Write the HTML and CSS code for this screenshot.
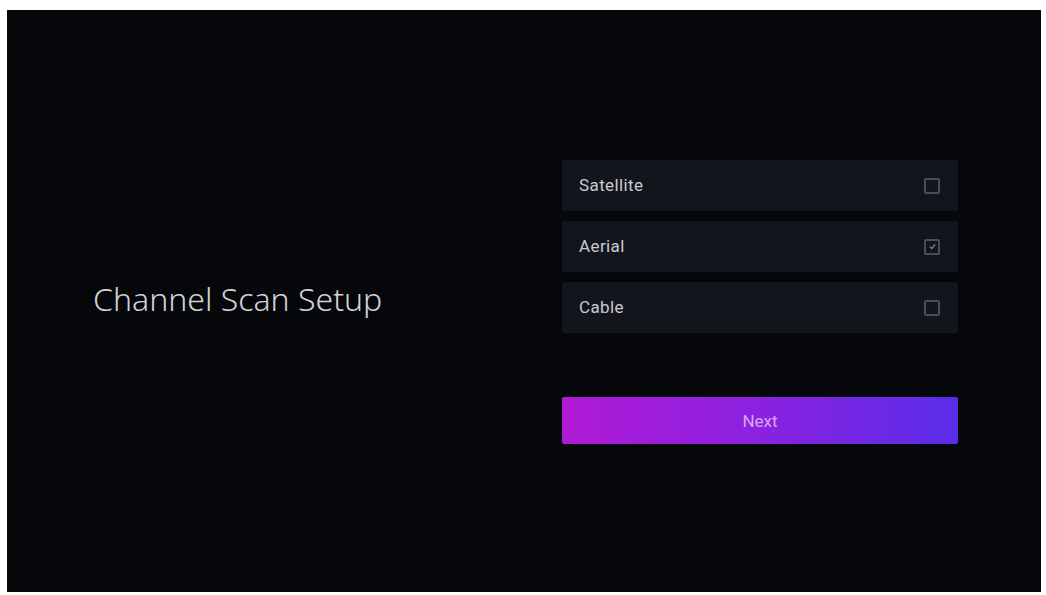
FILE: index.html
```html
<!DOCTYPE html>
<html>
<head>
<meta charset="utf-8">
<link rel="stylesheet" href="styles.css">
</head>
<body>
<div class="screen">
  <h1 class="title">Channel Scan Setup</h1>
  <div class="panel">
    <div class="options">
      <div class="option"><span class="label">Satellite</span><span class="box"></span></div>
      <div class="option"><span class="label">Aerial</span><span class="box checked"><svg viewBox="0 0 10 10" width="9" height="9"><path d="M2 5.2 L4.2 7.2 L8 2.8" fill="none" stroke="#7a7c86" stroke-width="1.6"/></svg></span></div>
      <div class="option"><span class="label">Cable</span><span class="box"></span></div>
    </div>
    <button class="next">Next</button>
  </div>
</div>
</body>
</html>
```

FILE: styles.css
```css
html, body {
  margin: 0;
  background: #ffffff;
}
body {
  padding: 10px 5px 3px 7px;
  width: 1046px;
  height: 595px;
  box-sizing: border-box;
}
.screen {
  height: 582px;
  background: #05070b;
  display: flex;
  align-items: center;
  padding-left: 86px;
  box-sizing: border-box;
  font-family: Roboto, "Liberation Sans", sans-serif;
}
.title {
  margin: 0 0 6px 0;
  width: 469px;
  flex: none;
  font-family: "Noto Sans", "Open Sans", sans-serif;
  font-weight: 300;
  font-size: 32px;
  color: #d2d3d6;
}
.panel {
  width: 396px;
  display: flex;
  flex-direction: column;
  margin-top: 2px;
}
.options {
  display: flex;
  flex-direction: column;
  gap: 10px;
}
.option {
  height: 51px;
  background: #13151d;
  border-radius: 2px;
  display: flex;
  align-items: center;
  justify-content: space-between;
  padding: 0 18px 0 17px;
  box-sizing: border-box;
}
.label {
  font-size: 17px;
  letter-spacing: 0.4px;
  color: #c9cad0;
  margin-top: -2px;
}
.box {
  width: 16px;
  height: 16px;
  border: 2px solid #4b4d56;
  border-radius: 2px;
  box-sizing: border-box;
  display: flex;
  align-items: center;
  justify-content: center;
}
.next {
  margin-top: 64px;
  height: 47px;
  border: none;
  border-radius: 2px;
  background: linear-gradient(90deg, #b01ad6 0%, #8a22e0 50%, #5a2ce8 100%);
  color: #d9a6f2;
  font-family: Roboto, "Liberation Sans", sans-serif;
  font-size: 17px;
  padding: 0;
}
```
